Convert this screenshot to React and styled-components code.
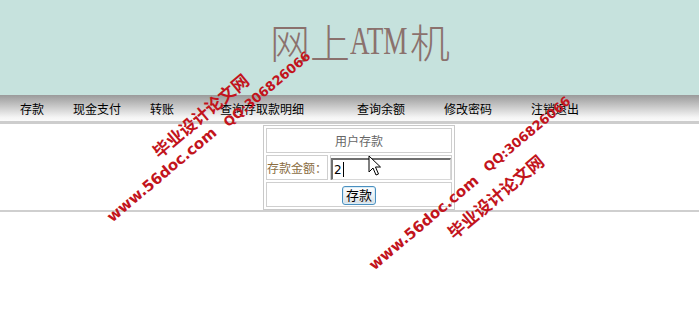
import React from "react";
import styled, { createGlobalStyle } from "styled-components";

const GlobalStyle = createGlobalStyle`
  html, body { margin: 0; padding: 0; background: #ffffff; }
  body { font-family: "Noto Sans CJK SC", "Noto Sans", sans-serif; }
`;

const Page = styled.div`
  position: relative;
  width: 699px;
  height: 336px;
  overflow: hidden;
  background: #fff;
`;

const Header = styled.header`
  height: 95px;
  box-sizing: border-box;
  background: #c6e2dd;
  display: flex;
  justify-content: center;
  padding: 19px 0 0 21px;
`;

const Title = styled.h1`
  margin: 0;
  height: 44px;
  font-family: "Noto Sans CJK SC", sans-serif;
  font-size: 40px;
  line-height: 44px;
  font-weight: 300;
  color: #8b716d;
  display: flex;
  align-items: center;
  white-space: nowrap;
`;

const Latin = styled.span`
  display: inline-block;
  width: 60px;
  height: 44px;
  font-family: "Liberation Serif", serif;
  font-weight: 400;
  transform: scaleX(0.68);
  transform-origin: left center;
  line-height: 44px;
`;

const Nav = styled.nav`
  height: 26px;
  background: linear-gradient(#9a9a9a, #f4f4f4 85%, #fbfbfb);
  display: flex;
  align-items: center;
`;

const NavItem = styled.a`
  margin-left: ${(p) => p.$gap}px;
  font-size: 12px;
  line-height: 16px;
  color: #000;
  text-decoration: none;
  white-space: nowrap;
  padding-top: 1px;
`;

const NavBand = styled.div`
  height: 3px;
  background: #cdcdcd;
`;

const Content = styled.main`
  display: flex;
  padding: 1px 0 0 263px;
`;

const Form = styled.div`
  width: 192px;
  box-sizing: border-box;
  border: 1px solid #c9c9c9;
  padding: 2px;
  display: grid;
  grid-template-columns: 62px 122px;
  grid-auto-rows: 25px;
  gap: 2px;
`;

const Cell = styled.div`
  grid-column: ${(p) => (p.$wide ? "1 / span 2" : "auto")};
  box-sizing: border-box;
  border: 1px solid #cfcfcf;
  display: flex;
  align-items: ${(p) => p.$align || "center"};
  justify-content: ${(p) => p.$justify || "flex-start"};
  font-size: 12px;
  color: ${(p) => p.$color || "#666"};
  white-space: nowrap;
  overflow: visible;
`;

const Field = styled.div`
  box-sizing: border-box;
  width: 122px;
  height: 22px;
  margin: 2px 0 0 0;
  border-top: 2px solid #6f6f6f;
  border-left: 2px solid #6f6f6f;
  border-right: 1px solid #d8d8d8;
  border-bottom: 1px solid #d8d8d8;
  background: #fff;
  font-family: "DejaVu Sans", sans-serif;
  font-size: 12px;
  line-height: 18px;
  color: #000;
  padding-left: 1px;
  display: flex;
  align-items: center;
`;

const Caret = styled.span`
  display: inline-block;
  width: 1px;
  height: 15px;
  background: #000;
  margin-left: 1px;
`;

const Button = styled.button`
  width: 34px;
  height: 19px;
  margin-top: 1px;
  padding: 0;
  box-sizing: border-box;
  border: 1px solid #4a8fbf;
  border-radius: 3px;
  background: linear-gradient(#ffffff, #eef2f4 50%, #d6dde2);
  box-shadow: inset 0 0 0 1px #d9ecf7;
  font-family: "Noto Sans CJK SC", sans-serif;
  font-size: 13px;
  line-height: 16px;
  color: #000;
`;

const Rule = styled.div`
  height: 2px;
  background: #cfcfcf;
`;

const Mark = styled.span`
  position: absolute;
  left: ${(p) => p.$x}px;
  top: ${(p) => p.$y}px;
  transform: translate(-50%, -50%) rotate(-40deg);
  font-family: ${(p) =>
    p.$latin ? '"DejaVu Sans", sans-serif' : '"Noto Sans CJK SC", sans-serif'};
  font-size: ${(p) => p.$size}px;
  font-weight: 700;
  color: #c2141c;
  white-space: nowrap;
  line-height: 1;
  pointer-events: none;
`;

const Pointer = styled.svg`
  position: absolute;
  left: 368px;
  top: 155px;
  width: 14px;
  height: 22px;
`;

const navItems = [
  ["存款", 20],
  ["现金支付", 29],
  ["转账", 29],
  ["查询存取款明细", 46],
  ["查询余额", 53],
  ["修改密码", 39],
  ["注销退出", 39],
];

const marks = [
  { text: "毕业设计论文网", x: 200, y: 115, size: 17 },
  { text: "QQ:306826066", x: 267, y: 89, size: 13, latin: true },
  { text: "www.56doc.com", x: 162, y: 175, size: 15, latin: true },
  { text: "www.56doc.com", x: 424, y: 223, size: 15, latin: true },
  { text: "毕业设计论文网", x: 495, y: 196, size: 17 },
  { text: "QQ:306826066", x: 527, y: 134, size: 13, latin: true },
];

export default function App() {
  return (
    <Page>
      <GlobalStyle />
      <Header>
        <Title>
          网上<Latin>ATM</Latin>机
        </Title>
      </Header>
      <Nav>
        {navItems.map(([label, gap]) => (
          <NavItem key={label} $gap={gap} href="#">
            {label}
          </NavItem>
        ))}
      </Nav>
      <NavBand />
      <Content>
        <Form>
          <Cell $wide $justify="center">用户存款</Cell>
          <Cell $color="#8a6d42">存款金额：</Cell>
          <Cell $align="flex-start">
            <Field>
              2<Caret />
            </Field>
          </Cell>
          <Cell $wide $justify="center">
            <Button>存款</Button>
          </Cell>
        </Form>
      </Content>
      <Rule />
      {marks.map((m, i) => (
        <Mark key={i} $x={m.x} $y={m.y} $size={m.size} $latin={m.latin}>
          {m.text}
        </Mark>
      ))}
      <Pointer viewBox="0 0 14 22">
        <path
          d="M1 1 L1 17 L5 13 L8 20 L10.5 19 L7.5 12 L12.5 12 Z"
          fill="#fff"
          stroke="#000"
          strokeWidth="1"
          strokeLinejoin="miter"
        />
      </Pointer>
    </Page>
  );
}
